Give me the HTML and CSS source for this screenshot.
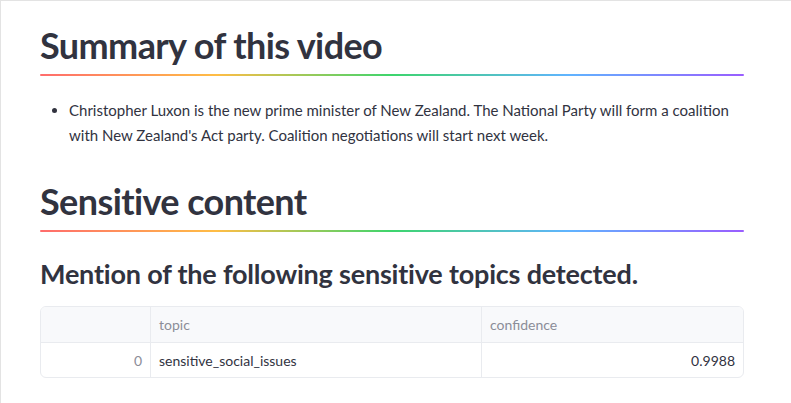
FILE: index.html
```html
<!DOCTYPE html>
<html lang="en">
<head>
<meta charset="utf-8">
<title>Summary</title>
<link rel="stylesheet" href="styles.css">
</head>
<body>
<div class="frame">
  <main class="content">
    <section class="block">
      <h2 class="header">Summary of this video</h2>
      <hr class="rainbow">
      <ul class="summary">
        <li>Christopher Luxon is the new prime minister of New Zealand. The National Party will form a coalition with New Zealand's Act party. Coalition negotiations will start next week.</li>
      </ul>
    </section>
    <section class="block block-second">
      <h2 class="header">Sensitive content</h2>
      <hr class="rainbow">
      <h3 class="subheader">Mention of the following sensitive topics detected.</h3>
      <div class="grid">
        <div class="row head">
          <div class="cell idx"></div>
          <div class="cell topic">topic</div>
          <div class="cell conf">confidence</div>
        </div>
        <div class="row body">
          <div class="cell idx">0</div>
          <div class="cell topic">sensitive_social_issues</div>
          <div class="cell conf num">0.9988</div>
        </div>
      </div>
    </section>
  </main>
</div>
</body>
</html>
```
FILE: styles.css
```css
* { box-sizing: border-box; }
html, body { margin: 0; padding: 0; background: #fff; }
body {
  font-family: "Lato", "Liberation Sans", sans-serif;
  color: #31333f;
}
.frame {
  height: 100vh;
  border-top: 1px solid #e3e3e3;
  border-left: 1px solid #e3e3e3;
  overflow: hidden;
}
.content {
  width: 704px;
  margin-left: 39px;
  padding-top: 23px;
}
.header {
  margin: 0;
  font-size: 36px;
  font-weight: 700;
  line-height: 43px;
  letter-spacing: -0.6px;
}
.rainbow {
  margin: 7px 0 0;
  height: 2px;
  border: 0;
  border-radius: 3px;
  background: linear-gradient(to right, #ff6c6c, #ffbd45 25%, #3dd56d 50%, #60b4ff 75%, #9a5dff);
}
.summary {
  margin: 22px 0 0;
  padding-left: 29px;
  font-size: 15px;
  line-height: 25px;
}
.block-second { margin-top: 32px; }
.subheader {
  margin: 25px 0 0;
  font-size: 27px;
  font-weight: 700;
  line-height: 34px;
  letter-spacing: -0.2px;
}
.grid {
  margin-top: 15px;
  border: 1px solid #e9ebef;
  border-radius: 6px;
  overflow: hidden;
  font-size: 14px;
}
.row {
  display: grid;
  grid-template-columns: 110px 331px 1fr;
}
.head { background: #f8f9fb; height: 36px; border-bottom: 1px solid #e9ebef; }
.body { height: 34px; }
.cell {
  display: flex;
  align-items: center;
  padding: 0 8px;
  border-right: 1px solid #e9ebef;
}
.cell:last-child { border-right: 0; }
.head .cell { color: #8b8d98; }
.idx { justify-content: flex-end; color: #8b8d98; }
.num { justify-content: flex-end; }
```
